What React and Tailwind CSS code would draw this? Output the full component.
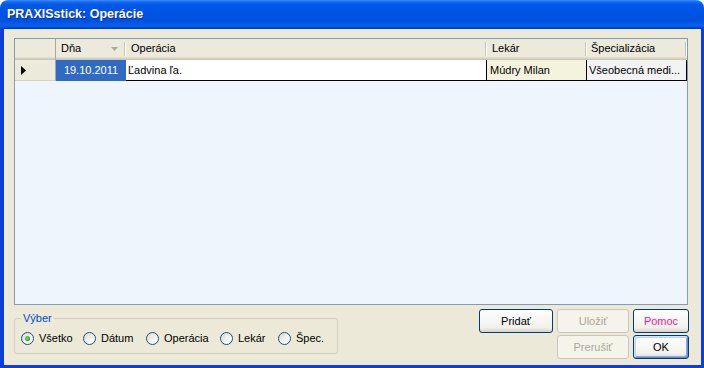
const F = "font-['Liberation_Sans',Arial,sans-serif]";

function HeaderCell({ w, label, sep = true, children, pl = "pl-[5px]" }) {
  return (
    <div className={`relative ${w} h-full flex items-center ${pl} pb-[2px] text-[11px] text-black`}>
      <span>{label}</span>
      {children}
      {sep && (
        <div className="absolute right-0 top-[3px] h-[14px] w-[2px] flex">
          <div className="w-[1px] h-full bg-[#C7C5B2]" />
          <div className="w-[1px] h-full bg-white" />
        </div>
      )}
    </div>
  );
}

function Radio({ checked, label, w }) {
  return (
    <div className={`flex items-center ${w}`}>
      <div className="w-[13px] h-[13px] rounded-full border border-[#1C5180] bg-[linear-gradient(135deg,#DCD7CB,#FFFFFF_80%)] flex items-center justify-center shrink-0">
        {checked && (
          <div className="w-[5px] h-[5px] rounded-full bg-[radial-gradient(circle_at_40%_40%,#7BE07B,#21A121_70%)]" />
        )}
      </div>
      <span className="ml-[5px] text-[11px] text-black leading-[13px]">{label}</span>
    </div>
  );
}

function Btn({ children, kind = "normal" }) {
  const base = "h-[24px] rounded-[3px] border text-[11px] flex items-center justify-center";
  if (kind === "disabled")
    return <div className={`${base} border-[#C9C7BA] bg-[#F5F4EA] text-[#ACA899]`}>{children}</div>;
  if (kind === "default")
    return (
      <div
        className={`${base} border-[#003C74] bg-[linear-gradient(180deg,#FFFFFF,#F1F1EC_80%,#DCD7CA)] text-black shadow-[inset_1px_1px_0_#CEE7FF,inset_-1px_-1px_0_#6982EE,inset_2px_2px_0_#BCD4F6,inset_-2px_-2px_0_#89ADE4]`}
      >
        {children}
      </div>
    );
  return (
    <div
      className={`${base} border-[#003C74] bg-[linear-gradient(180deg,#FFFFFF,#F1F1EC_80%,#D6D0C5)] ${kind === "pink" ? "text-[#FF1493]" : "text-black"}`}
    >
      {children}
    </div>
  );
}

export default function App() {
  return (
    <div className={`w-[704px] h-[368px] flex flex-col bg-white ${F}`}>
      {/* Title bar */}
      <div className="h-[29px] shrink-0 rounded-t-[8px] bg-[linear-gradient(180deg,#3D8DF5_0px,#1468F0_2px,#0058E8_5px,#0055E5_12px,#0050DC_21px,#0660F2_25px,#0458EE_27px,#003DBC_28px)] flex items-center pl-[7px] pb-[1px]">
        <span className="text-white font-bold text-[12.5px] [text-shadow:1px_1px_0_#0A2A9A]">
          PRAXISstick: Operácie
        </span>
      </div>

      {/* Body */}
      <div className="flex-1 bg-[#ECE9D8] border-l-4 border-r-[3px] border-b-[3px] border-[#0B3EDA] pt-[9px] pl-[10px] flex flex-col">
        {/* Grid */}
        <div className="w-[674px] h-[267px] border border-[#7F9DB9] bg-[#EEF5FD] flex flex-col">
          {/* Header */}
          <div className="h-[21px] flex bg-[#EBEADB] shadow-[inset_0_-1px_0_#CBC7B8,inset_0_-2px_0_#D6D2C2,inset_0_-3px_0_#E2DECD]">
            <div className="w-[41px] h-full border-r border-[#A7A698]" />
            <HeaderCell w="w-[70px]" label="Dňa">
              <svg className="absolute left-[55px] top-[8px]" width="7" height="4" viewBox="0 0 7 4">
                <path d="M0 0H7L3.5 4Z" fill="#ACA899" />
              </svg>
            </HeaderCell>
            <HeaderCell w="w-[361px]" label="Operácia" />
            <HeaderCell w="w-[100px]" label="Lekár" />
            <HeaderCell w="w-[100px]" label="Špecializácia" pl="pl-[4px]" />
          </div>
          {/* Data row */}
          <div className="h-[21px] flex text-[11px]">
            <div className="w-[41px] h-full bg-[#EBEADB] border-r border-b border-r-[#A7A698] border-b-[#D6D2C2] flex items-center pl-[6px]">
              <svg width="5" height="9" viewBox="0 0 5 9">
                <path d="M0 0L5 4.5L0 9Z" fill="#000" />
              </svg>
            </div>
            <div className="w-[70px] h-full bg-[#316AC5] text-white flex items-center justify-center">
              19.10.2011
            </div>
            <div className="w-[361px] h-full bg-white border-r border-b border-black flex items-center pl-[2px] text-black">
              Ľadvina ľa.
            </div>
            <div className="w-[100px] h-full bg-[#F4F4DE] border-r border-b border-black flex items-center pl-[3px] text-black">
              Múdry Milan
            </div>
            <div className="w-[100px] h-full bg-[#F3F3F3] border-r border-b border-black flex items-center pl-[2px] text-black whitespace-nowrap overflow-hidden">
              Všeobecná medi...
            </div>
          </div>
        </div>

        {/* Bottom area */}
        <div className="flex items-start">
          {/* Group box */}
          <div className="relative mt-[13px] w-[324px] h-[36px] border border-[#D0D0BF] rounded-[3px]">
            <span className="absolute left-[6px] top-[-7px] px-[2px] bg-[#ECE9D8] text-[#0046D5] text-[11px] leading-[13px]">
              Výber
            </span>
            <div className="flex items-center h-full pl-[6px] pt-[5px]">
              <Radio checked label="Všetko" w="w-[62px]" />
              <Radio label="Dátum" w="w-[63px]" />
              <Radio label="Operácia" w="w-[74px]" />
              <Radio label="Lekár" w="w-[58px]" />
              <Radio label="Špec." w="w-[50px]" />
            </div>
          </div>

          {/* Buttons */}
          <div className="ml-[141px] mt-[4px] grid grid-cols-[74px_72px_56px] gap-x-[4px] gap-y-[2px]">
            <Btn>Pridať</Btn>
            <Btn kind="disabled">Uložiť</Btn>
            <Btn kind="pink">Pomoc</Btn>
            <div />
            <Btn kind="disabled">Prerušiť</Btn>
            <Btn kind="default">OK</Btn>
          </div>
        </div>
      </div>
    </div>
  );
}
